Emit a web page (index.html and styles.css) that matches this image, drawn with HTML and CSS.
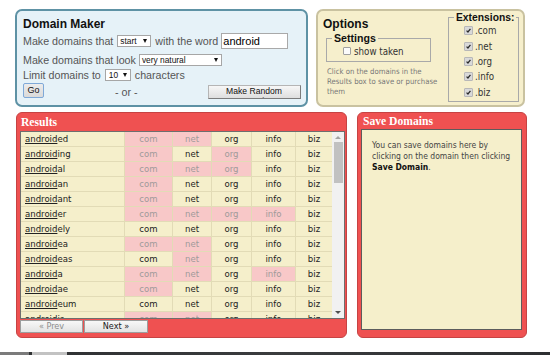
FILE: index.html
```html
<!DOCTYPE html>
<html>
<head>
<meta charset="utf-8">
<link rel="stylesheet" href="styles.css">
</head>
<body>
<div class="page">
  <div class="topline"><p>help, try typing any</p></div>

  <div class="toprow">
    <section class="maker">
      <h1>Domain Maker</h1>
      <div class="line l1">Make domains that <span class="sel sel-start">start<i></i></span> with the word <span class="inp">android</span></div>
      <div class="line l2">Make domains that look <span class="sel sel-look">very natural<i></i></span></div>
      <div class="line l3">Limit domains to <span class="sel sel-num">10<i></i></span> characters</div>
      <div class="line l4"><span class="btn go">Go</span><span class="or">- or -</span><span class="btn rand">Make Random<br>Domain</span></div>
    </section>

    <section class="options">
      <div class="opt-left">
        <h2>Options</h2>
        <fieldset class="settings">
          <legend>Settings</legend>
          <label class="chk"><span class="cb"></span>show taken</label>
        </fieldset>
        <p class="hint">Click on the domains in the<br>Results box to save or purchase<br>them</p>
      </div>
      <fieldset class="exts">
        <legend>Extensions:</legend>
        <label class="chk"><span class="cb on"><svg viewBox="0 0 9 9"><path d="M2 4.6 L3.8 6.4 L7 2.4" /></svg></span>.com</label>
        <label class="chk"><span class="cb on"><svg viewBox="0 0 9 9"><path d="M2 4.6 L3.8 6.4 L7 2.4" /></svg></span>.net</label>
        <label class="chk"><span class="cb on"><svg viewBox="0 0 9 9"><path d="M2 4.6 L3.8 6.4 L7 2.4" /></svg></span>.org</label>
        <label class="chk"><span class="cb on"><svg viewBox="0 0 9 9"><path d="M2 4.6 L3.8 6.4 L7 2.4" /></svg></span>.info</label>
        <label class="chk"><span class="cb on"><svg viewBox="0 0 9 9"><path d="M2 4.6 L3.8 6.4 L7 2.4" /></svg></span>.biz</label>
      </fieldset>
    </section>
  </div>

  <div class="bottomrow">
    <section class="results">
      <h3>Results</h3>
      <div class="frame">
        <div class="rows">
          <div class="row"><span class="nm"><u>android</u>ed</span><span class="t">com</span><span class="t">net</span><span>org</span><span>info</span><span>biz</span></div>
          <div class="row"><span class="nm"><u>android</u>ing</span><span class="t">com</span><span>net</span><span class="t">org</span><span>info</span><span>biz</span></div>
          <div class="row"><span class="nm"><u>android</u>al</span><span class="t">com</span><span class="t">net</span><span class="t">org</span><span>info</span><span>biz</span></div>
          <div class="row"><span class="nm"><u>android</u>an</span><span class="t">com</span><span>net</span><span>org</span><span>info</span><span>biz</span></div>
          <div class="row"><span class="nm"><u>android</u>ant</span><span class="t">com</span><span>net</span><span>org</span><span>info</span><span>biz</span></div>
          <div class="row"><span class="nm"><u>android</u>er</span><span class="t">com</span><span class="t">net</span><span class="t">org</span><span class="t">info</span><span>biz</span></div>
          <div class="row"><span class="nm"><u>android</u>ely</span><span>com</span><span>net</span><span>org</span><span>info</span><span>biz</span></div>
          <div class="row"><span class="nm"><u>android</u>ea</span><span class="t">com</span><span class="t">net</span><span>org</span><span>info</span><span>biz</span></div>
          <div class="row"><span class="nm"><u>android</u>eas</span><span>com</span><span class="t">net</span><span>org</span><span>info</span><span>biz</span></div>
          <div class="row"><span class="nm"><u>android</u>a</span><span class="t">com</span><span class="t">net</span><span>org</span><span class="t">info</span><span>biz</span></div>
          <div class="row"><span class="nm"><u>android</u>ae</span><span class="t">com</span><span>net</span><span>org</span><span>info</span><span>biz</span></div>
          <div class="row"><span class="nm"><u>android</u>eum</span><span>com</span><span>net</span><span>org</span><span>info</span><span>biz</span></div>
          <div class="row"><span class="nm"><u>android</u>is</span><span class="t">com</span><span class="t">net</span><span>org</span><span>info</span><span>biz</span></div>
        </div>
        <div class="sb">
          <span class="arr up"></span>
          <span class="thumb"></span>
          <span class="gap"></span>
          <span class="arr down"></span>
        </div>
      </div>
      <div class="pager">
        <span class="pbtn prev">« Prev</span>
        <span class="pbtn next">Next »</span>
      </div>
    </section>

    <section class="save">
      <h3>Save Domains</h3>
      <div class="savebody">
        <p>You can save domains here by<br>clicking on the domain then clicking<br><b>Save Domain</b>.</p>
      </div>
    </section>
  </div>

  <div class="taskbar"><span class="tb1"></span><span class="tb2"></span></div>
</div>
</body>
</html>
```

FILE: styles.css
```css
* { box-sizing: border-box; }

body {
  margin: 0;
  width: 550px;
  height: 355px;
  overflow: hidden;
  background: #ffffff;
  font-family: "Liberation Sans", Arial, sans-serif;
}

.page {
  display: flex;
  flex-direction: column;
  height: 355px;
}

.topline {
  height: 9px;
  overflow: hidden;
  flex: none;
}
.topline p {
  margin: -11px 0 0 222px;
  font-size: 10px;
  line-height: 12px;
  color: #666;
  white-space: nowrap;
}

/* ---------- top row ---------- */
.toprow {
  display: flex;
  gap: 8px;
  margin-left: 15px;
  height: 98px;
  flex: none;
}

.maker {
  width: 293px;
  height: 98px;
  border: 2px solid #5e92a5;
  border-radius: 7px;
  background: #e6f2f8;
  padding: 6px 0 0 6px;
  color: #555;
  font-size: 10.7px;
}

.maker h1 {
  margin: 0;
  height: 14px;
  font-size: 12px;
  line-height: 14px;
  font-weight: bold;
  color: #111;
}

.line {
  display: flex;
  align-items: center;
  white-space: nowrap;
}
.l1 { margin-top: 2px; height: 16px; }
.l2 { margin-top: 4px; height: 13px; }
.l3 { margin-top: 2px; height: 13px; }
.l4 { margin-top: 2px; height: 17px; align-items: flex-start; }

.sel {
  display: flex;
  align-items: center;
  height: 12px;
  background: #fff;
  border: 1px solid #a6a6a6;
  color: #111;
  font-size: 8.4px;
  padding-left: 2px;
}
.sel i {
  margin-left: auto;
  margin-right: 3px;
  width: 0;
  height: 0;
  border-left: 2.5px solid transparent;
  border-right: 2.5px solid transparent;
  border-top: 4px solid #111;
}
.sel-start { width: 34px; margin: 0 4px 0 4px; }
.sel-look { width: 83px; margin-left: 3px; }
.sel-num { width: 26px; margin: 0 4px 0 4px; padding-left: 3px; }

.inp {
  display: flex;
  align-items: center;
  width: 67px;
  height: 16px;
  margin-left: 3px;
  background: #fff;
  border: 1px solid #a9a9a9;
  color: #000;
  font-size: 11px;
  padding-left: 1px;
}

.btn {
  display: block;
  text-align: center;
  color: #111;
}
.go {
  width: 21px;
  height: 15px;
  border: 1px solid #7fa9d8;
  border-radius: 2px;
  background: linear-gradient(#ececec, #dadada);
  font-size: 9px;
  line-height: 13px;
}
.or {
  margin-left: 71px;
  margin-top: 3px;
  line-height: 12px;
}
.rand {
  margin-left: 70px;
  margin-top: 2px;
  width: 93px;
  height: 14px;
  overflow: hidden;
  border: 1px solid #b5b5b5;
  border-right-color: #7c7c7c;
  border-bottom-color: #7c7c7c;
  background: linear-gradient(#f7f7f7, #dedede);
  font-size: 8.6px;
  line-height: 9.6px;
  padding-top: 1px;
}

/* options */
.options {
  width: 209px;
  height: 98px;
  border: 2px solid #c9c2a0;
  border-radius: 7px;
  background: #f6efcc;
  display: flex;
  padding: 0 4px 0 5px;
}
.opt-left { flex: 1; }
.options h2 {
  margin: 6px 0 0 0;
  height: 14px;
  font-size: 12px;
  line-height: 14px;
  font-weight: bold;
  color: #111;
}

fieldset {
  margin: 0;
  min-width: 0;
  border: 1px solid #a9a9a9;
}
legend {
  padding: 0 2px;
  font-weight: bold;
  color: #111;
  line-height: 11px;
}

.settings {
  width: 105px;
  margin: 2px 0 0 3px;
  padding: 1px 0 4px 5px;
}
.settings legend { font-size: 10.6px; }

.chk {
  display: flex;
  align-items: center;
  font-family: "DejaVu Sans Condensed", "DejaVu Sans", sans-serif;
  font-size: 9.7px;
  color: #333;
  white-space: nowrap;
}
.settings .chk { padding-left: 11px; height: 12px; }

.cb {
  display: block;
  width: 8px;
  height: 8px;
  margin-right: 3px;
  border: 1px solid #a0a0a0;
  background: #fbfbfb;
  border-radius: 1px;
}
.cb.on {
  width: 9px;
  height: 9px;
  margin-right: 2px;
  background: #d9d9d9;
  border-color: #b8b8b8;
}
.cb svg {
  display: block;
  width: 7px;
  height: 7px;
  fill: none;
  stroke: #2a2a2a;
  stroke-width: 1.6;
}

.hint {
  margin: 5px 0 0 4px;
  font-family: "DejaVu Sans Condensed", "DejaVu Sans", sans-serif;
  font-size: 7.7px;
  line-height: 10px;
  color: #777;
  white-space: nowrap;
}

.exts {
  flex: none;
  width: 71px;
  height: 90px;
  margin-top: 1px;
  padding: 0 0 0 5px;
}
.exts legend { font-size: 10.3px; }
.exts .chk {
  height: 15.4px;
  padding-left: 10px;
}

/* ---------- bottom row ---------- */
.bottomrow {
  display: flex;
  margin-top: 5px;
  margin-left: 16px;
  height: 226px;
  flex: none;
}

.results, .save {
  height: 226px;
  background: #ef5151;
  border: 1px solid #c64343;
  border-radius: 6px;
  display: flex;
  flex-direction: column;
}
.results {
  width: 331px;
  padding: 0 1px 4px 3px;
}
.save {
  width: 170px;
  margin-left: 10px;
  padding: 0 4px 7px 3px;
}

h3 {
  margin: 0;
  font-family: "Liberation Serif", "Times New Roman", serif;
  font-weight: bold;
  font-size: 11.6px;
  color: #fff;
  padding-left: 1px;
}
.results h3 { height: 18px; line-height: 19px; }
.save h3 { height: 16px; line-height: 17px; padding-left: 2px; }

.frame {
  display: flex;
  width: 325px;
  height: 188px;
  border: 1px solid #6e6e6e;
  background: #f5efcb;
  overflow: hidden;
}

.rows {
  width: 311px;
  flex: none;
  font-family: "DejaVu Sans Condensed", "DejaVu Sans", sans-serif;
  font-size: 9.5px;
  color: #222;
}
.row {
  display: grid;
  grid-template-columns: 104px 48px 39px 40px 44px 36px;
  height: 15px;
}
.row span {
  border-right: 1px solid #e2dbb6;
  border-bottom: 1px solid #e2dbb6;
  text-align: center;
  line-height: 14px;
}
.row span:last-child { border-right: none; }
.row .nm {
  text-align: left;
  padding-left: 4px;
}
.row .nm u { text-decoration-thickness: 1px; }
.row .t {
  background: #f8c8c8;
  color: #a09a9a;
}

.sb {
  width: 12px;
  flex: none;
  background: #f1f1f1;
  display: flex;
  flex-direction: column;
  align-items: center;
}
.arr {
  width: 0;
  height: 0;
  border-left: 3px solid transparent;
  border-right: 3px solid transparent;
}
.arr.up {
  margin-top: 4px;
  border-bottom: 3px solid #a3a3a3;
}
.thumb {
  margin-top: 3px;
  width: 9px;
  height: 41px;
  background: #c1c1c1;
}
.gap { flex: 1; }
.arr.down {
  margin-bottom: 4px;
  border-top: 3px solid #505050;
}

.pager {
  display: flex;
  margin-top: 1px;
  height: 13px;
}
.pbtn {
  display: block;
  height: 13px;
  border: 1px solid #9d9d9d;
  background: linear-gradient(#f8f8f8, #e3e3e3);
  font-family: "DejaVu Sans Condensed", "DejaVu Sans", sans-serif;
  font-size: 9px;
  line-height: 11px;
  text-align: center;
  white-space: nowrap;
}
.prev { width: 63px; color: #8c8c8c; }
.next { width: 64px; margin-left: 1px; color: #222; }

.savebody {
  height: 201px;
  border: 1px solid #5c5c5c;
  background: #f5efcb;
  padding: 9.5px 6px 0 10px;
}
.savebody p {
  margin: 0;
  font-family: "DejaVu Sans Condensed", "DejaVu Sans", sans-serif;
  font-size: 8.5px;
  line-height: 11px;
  color: #444;
  white-space: nowrap;
}
.savebody b { color: #111; }

/* ---------- taskbar ---------- */
.taskbar {
  margin-top: 14px;
  flex: 1;
  display: flex;
  background: linear-gradient(90deg, #2d2f31, #3a3c3e 50%, #2d2f31);
}
.tb1 { width: 29px; background: #7b7b7b; }
.tb2 { width: 35px; margin-left: 3px; background: #c2c2c2; }
```
